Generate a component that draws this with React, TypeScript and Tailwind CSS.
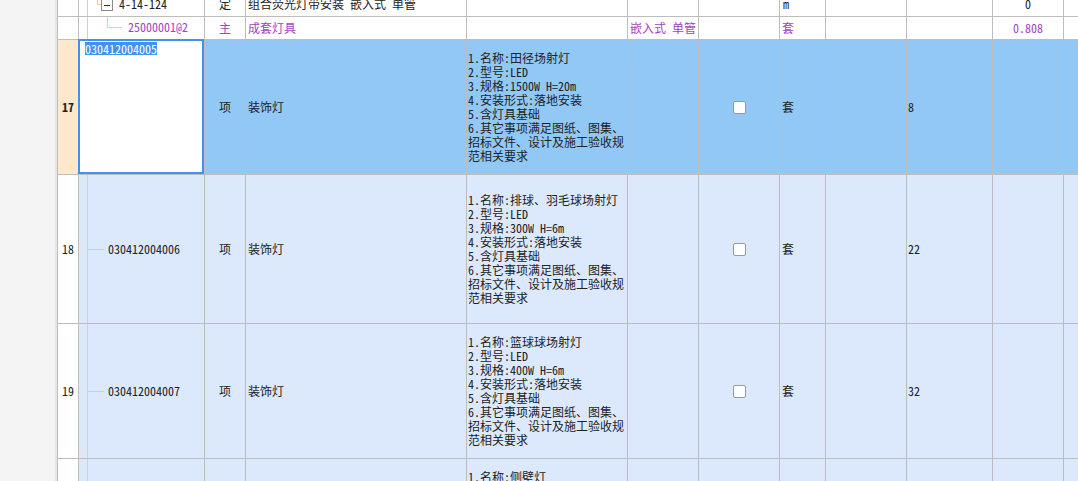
import type { ReactNode } from 'react'

const W = ['w-[21px]', 'w-[126px]', 'w-[41px]', 'w-[221px]', 'w-[161px]', 'w-[71px]', 'w-[81px]', 'w-[46px]', 'w-[81px]', 'w-[86px]', 'w-[71px]']

type Item = {
  no: string
  code: string
  name: string
  desc: string[]
  qty: string
  h: string
}

const items: Item[] = [
  {
    no: '18',
    code: '030412004006',
    name: '装饰灯',
    desc: ['1.名称:排球、羽毛球场射灯', '2.型号:LED', '3.规格:300W H=6m', '4.安装形式:落地安装', '5.含灯具基础', '6.其它事项满足图纸、图集、', '招标文件、设计及施工验收规', '范相关要求'],
    qty: '22',
    h: 'h-[149px]',
  },
  {
    no: '19',
    code: '030412004007',
    name: '装饰灯',
    desc: ['1.名称:篮球球场射灯', '2.型号:LED', '3.规格:400W H=6m', '4.安装形式:落地安装', '5.含灯具基础', '6.其它事项满足图纸、图集、', '招标文件、设计及施工验收规', '范相关要求'],
    qty: '32',
    h: 'h-[135px]',
  },
  {
    no: '',
    code: '',
    name: '',
    desc: ['1.名称:侧壁灯', '2.型号:LED', '3.规格:150W', '4.安装形式:壁装', '5.含灯具支架', '6.其它事项满足图纸、图集、', '招标文件、设计及施工验收规', '范相关要求'],
    qty: '',
    h: 'h-[135px]',
  },
]

function Cell({ i, className = '', children }: { i: number; className?: string; children?: ReactNode }) {
  return <div className={`${W[i]} shrink-0 h-full border-r border-[#bdbdbd] flex items-center ${className}`}>{children}</div>
}

function Checkbox() {
  return <div className="w-[13px] h-[13px] bg-white border border-[#9a9a9a] rounded-[2px]" />
}

function Desc({ lines }: { lines: string[] }) {
  return (
    <div className="pl-[1px] text-[12px] leading-[14px] whitespace-nowrap">
      {lines.map((l, k) => (
        <div key={k}>{l}</div>
      ))}
    </div>
  )
}

export default function App() {
  return (
    <div className="w-[1078px] h-[481px] overflow-hidden flex bg-white text-[#222] font-['Noto_Sans_Mono_CJK_SC','Noto_Sans_CJK_SC',monospace] [font-feature-settings:'hwid']">
      <div className="w-[57px] shrink-0 h-full flex">
        <div className="w-[55px] bg-[#f4f4f4]" />
        <div className="w-[2px] bg-[#e6e6e6]" />
      </div>
      <div className="flex-1 border-l border-[#bdbdbd] -mt-[8px]">
        {/* row: 定额 */}
        <div className="h-[25px] flex border-b border-[#bdbdbd] bg-white text-[12px]">
          <Cell i={0} />
          <Cell i={1} className="relative">
            <div className="absolute left-[8px] top-0 bottom-0 w-px bg-[#f8c98c]" />
            <div className="absolute left-[18px] top-0 h-[12px] w-px bg-[#f8c98c]" />
            <div className="absolute left-[18px] top-[12px] h-px w-[4px] bg-[#f8c98c]" />
            <div className="absolute left-[22px] top-[7px] w-[12px] h-[12px] border border-[#8a8a8a] bg-white flex items-center justify-center">
              <div className="w-[6px] h-px bg-[#333]" />
            </div>
            <span className="absolute left-[40px] top-[5px] text-[12px] leading-[14px]">4-14-124</span>
          </Cell>
          <Cell i={2} className="justify-center">定</Cell>
          <Cell i={3} className="pl-[2px] whitespace-nowrap overflow-visible">组合荧光灯带安装 嵌入式 单管</Cell>
          <Cell i={4} />
          <Cell i={5} />
          <Cell i={6} />
          <Cell i={7} className="pl-[3px]">m</Cell>
          <Cell i={8} />
          <Cell i={9} />
          <Cell i={10} className="justify-center">0</Cell>
          <div className="flex-1" />
        </div>
        {/* row: 主材 */}
        <div className="h-[23px] flex border-b border-[#bdbdbd] bg-white text-[12px] text-[#a43fc4]">
          <Cell i={0} />
          <Cell i={1} className="relative">
            <div className="absolute left-[8px] top-0 bottom-0 w-px bg-[#f8c98c]" />
            <div className="absolute left-[28px] top-0 h-[11px] w-px bg-[#f8c98c]" />
            <div className="absolute left-[28px] top-[10px] h-px w-[15px] bg-[#f8c98c]" />
            <span className="absolute left-[49px] top-[3px] text-[12px] leading-[14px]">25000001@2</span>
          </Cell>
          <Cell i={2} className="justify-center">主</Cell>
          <Cell i={3} className="pl-[2px]">成套灯具</Cell>
          <Cell i={4} />
          <Cell i={5} className="pl-[2px] whitespace-nowrap">嵌入式 单管</Cell>
          <Cell i={6} />
          <Cell i={7} className="pl-[2px]">套</Cell>
          <Cell i={8} />
          <Cell i={9} />
          <Cell i={10} className="justify-center">0.808</Cell>
          <div className="flex-1" />
        </div>
        {/* selected row 17 */}
        <div className="h-[135px] flex border-b border-[#bdbdbd] bg-[#92c8f5] text-[12px]">
          <Cell i={0} className="justify-center bg-[#fde8cc] font-bold">17</Cell>
          <Cell i={1} className="relative bg-white items-start">
            <div className="absolute -left-px -top-px right-0 bottom-0 border-2 border-[#3f92f2]" />
            <span className="mt-[2px] ml-[6px] bg-[#3f92f2] text-white text-[12px] leading-[13px]">030412004005</span>
          </Cell>
          <Cell i={2} className="justify-center">项</Cell>
          <Cell i={3} className="pl-[2px]">装饰灯</Cell>
          <Cell i={4}>
            <Desc lines={['1.名称:田径场射灯', '2.型号:LED', '3.规格:1500W H=20m', '4.安装形式:落地安装', '5.含灯具基础', '6.其它事项满足图纸、图集、', '招标文件、设计及施工验收规', '范相关要求']} />
          </Cell>
          <Cell i={5} />
          <Cell i={6} className="justify-center">
            <Checkbox />
          </Cell>
          <Cell i={7} className="pl-[2px]">套</Cell>
          <Cell i={8} />
          <Cell i={9} className="pl-[1px]">8</Cell>
          <Cell i={10} />
          <div className="flex-1" />
        </div>
        {items.map((it, k) => (
          <div key={k} className={`${it.h} flex border-b border-[#bdbdbd] bg-[#dce9fd] text-[12px]`}>
            <Cell i={0} className="justify-center bg-white">{it.no}</Cell>
            <Cell i={1} className="relative">
              <div className="absolute left-[8px] top-0 bottom-0 w-px bg-[#f8c98c]" />
              {it.code && <div className="absolute left-[9px] top-1/2 h-px w-[16px] bg-[#f8c98c]" />}
              <span className="ml-[29px]">{it.code}</span>
            </Cell>
            <Cell i={2} className="justify-center">{it.code ? '项' : ''}</Cell>
            <Cell i={3} className="pl-[2px]">{it.name}</Cell>
            <Cell i={4}>
              <Desc lines={it.desc} />
            </Cell>
            <Cell i={5} />
            <Cell i={6} className="justify-center">{it.code && <Checkbox />}</Cell>
            <Cell i={7} className="pl-[2px]">{it.code ? '套' : ''}</Cell>
            <Cell i={8} />
            <Cell i={9} className="pl-[1px]">{it.qty}</Cell>
            <Cell i={10} />
            <div className="flex-1" />
          </div>
        ))}
      </div>
    </div>
  )
}
